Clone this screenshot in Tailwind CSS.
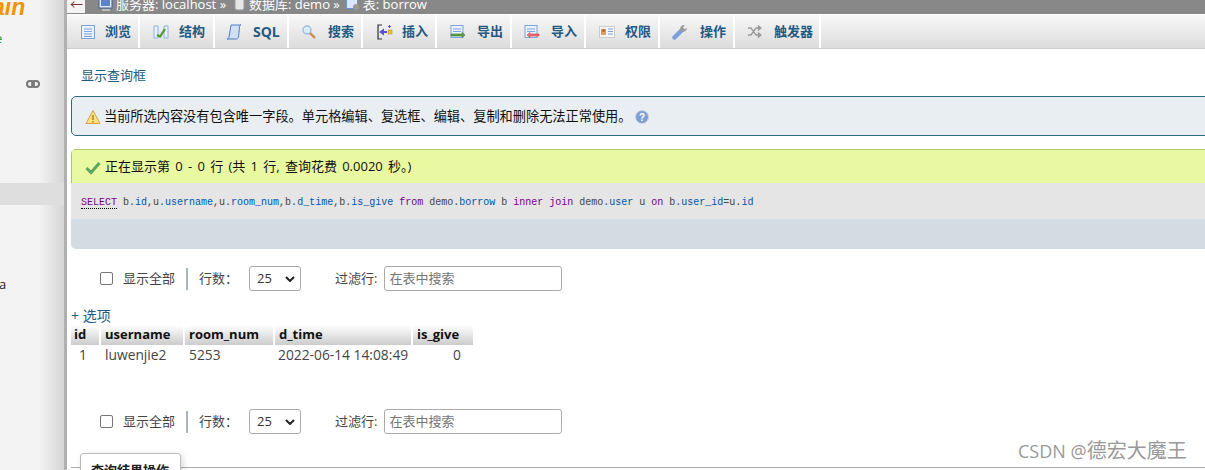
<!DOCTYPE html>
<html lang="zh">
<head>
  <meta charset="utf-8" />
  <title>phpMyAdmin</title>
  <script src="https://cdn.jsdelivr.net/npm/@tailwindcss/browser@4"></script>
</head>
<body class="h-[470px] w-[1205px] overflow-hidden bg-white font-['Open_Sans','Noto_Sans_CJK_SC',sans-serif] text-[13px] text-[#444]">
  <div class="relative flex h-[470px]">
    <!-- Sidebar -->
    <aside class="h-full w-[67px] shrink-0 border-r-[3px] border-[#b0b0b0] bg-gradient-to-r from-[#f3f3f3] from-60% to-[#d6d6d6] overflow-hidden">
      <div class="-mt-[8px] -ml-[8px] h-[34px] font-['Liberation_Sans',sans-serif] text-[23px] font-bold italic leading-[30px] text-[#f29400]">ain</div>
      <div class="-ml-[5px] h-[48px] text-[13px] leading-[24px] text-[#3c8a2e]">e</div>
      <div class="flex h-[109px] justify-end pr-[24px]">
        <svg class="mt-[6px] h-[8px] w-[14px]" viewBox="0 0 14 8" fill="none" stroke="#777" stroke-width="2"><rect x="1" y="1" width="7" height="6" rx="3"/><rect x="6" y="1" width="7" height="6" rx="3"/></svg>
      </div>
      <div class="h-[22px] bg-[#dedede]"></div>
      <div class="-ml-[1px] pt-[70px] text-[13px] leading-[18px] text-[#222]">a</div>
    </aside>

    <!-- Main -->
    <main class="min-w-0 flex-1 overflow-hidden">
      <!-- Breadcrumb -->
      <div class="flex h-[14px] items-start overflow-hidden bg-[#888] text-[13px] text-white">
        <div class="h-[13px] w-[18px] overflow-hidden bg-[#f4f4f4] pl-[3px] text-[13px] leading-[8px] text-[#733]">←</div>
        <div class="-mt-[6px] ml-[13px] flex items-center whitespace-nowrap leading-[20px]">
          <svg class="mr-[2px] h-[16px] w-[16px]" viewBox="0 0 16 16"><rect x="1" y="2" width="13" height="10" fill="#dfe7f5" stroke="#44618f"/><rect x="3" y="4" width="9" height="6" fill="#5b84c4"/><rect x="4" y="13" width="8" height="2" fill="#bbb"/></svg>
          <span>服务器: localhost »</span>
          <svg class="ml-[8px] mr-[4px] h-[14px] w-[11px]" viewBox="0 0 11 14"><rect x="1" y="1" width="9" height="12" rx="2" fill="#e6e6e6" stroke="#999"/></svg>
          <span>数据库: demo »</span>
          <svg class="ml-[6px] mr-[3px] h-[14px] w-[14px]" viewBox="0 0 14 14"><rect x="0.5" y="0.5" width="11" height="11" fill="#dbe7f7" stroke="#6d94cf"/><circle cx="10" cy="10" r="3" fill="#999"/></svg>
          <span>表: borrow</span>
        </div>
      </div>

      <!-- Tabs -->
      <nav class="mt-[1px] flex h-[34px] border-b border-[#ccc] bg-gradient-to-b from-[#f8f8f8] to-[#dcdcdc] font-bold text-[#235a81]">
        <a class="flex w-[73px] items-center border-r-2 border-white pl-[13px]">
          <svg class="mr-[9px] h-[16px] w-[16px]" viewBox="0 0 16 16" fill="#eaf1fb" stroke="#7ba3dc"><rect x="1.5" y="1.5" width="13" height="13"/><path d="M4 5h8M4 7.5h8M4 10h8M4 12.5h8" fill="none"/></svg>
          <span>浏览</span>
        </a>
        <a class="flex w-[75px] items-center border-r-2 border-white pl-[13px]">
          <svg class="mr-[10px] h-[16px] w-[16px]" viewBox="0 0 16 16" fill="#eaf1fb" stroke="#8fb0dd"><path d="M1 2h4v12H1zM11 2h4v12h-4z"/><path d="M4 11l3 1.5L12 5" fill="none" stroke="#4d9a33" stroke-width="2.2"/></svg>
          <span>结构</span>
        </a>
        <a class="flex w-[74px] items-center border-r-2 border-white pl-[11px]">
          <svg class="mr-[11px] h-[16px] w-[16px]" viewBox="0 0 16 16" fill="#cfe0f5" stroke="#4f7fc0"><path d="M5 1h10c-1 0-1.500 1-1.500 2l-1 10c0 1-1 2-2 2H1c1 0 2-1 2-2z"/></svg>
          <span class="text-[14px]">SQL</span>
        </a>
        <a class="flex w-[74px] items-center border-r-2 border-white pl-[13px]">
          <svg class="mr-[12px] h-[14px] w-[14px]" viewBox="0 0 14 14" fill="none"><circle cx="5" cy="5" r="4" fill="#dcebfa" stroke="#9dbde0" stroke-width="1.4"/><path d="M8 8l5 5" stroke="#c98a4a" stroke-width="2.4"/></svg>
          <span>搜索</span>
        </a>
        <a class="flex w-[74px] items-center border-r-2 border-white pl-[14px]">
          <svg class="mr-[9px] h-[16px] w-[16px]" viewBox="0 0 16 16" fill="none"><path d="M5 1H1v14h4" stroke="#333" stroke-width="1.2"/><path d="M2 8l5-3.5V7h3v2H7v2.500z" fill="#5a4fd0"/><rect x="11" y="6" width="4" height="4" fill="#f0c22e" stroke="#a88a20" stroke-width="0.5"/><path d="M12.500 1v3M11 2.500h3" stroke="#5a4fd0"/></svg>
          <span>插入</span>
        </a>
        <a class="flex w-[75px] items-center border-r-2 border-white pl-[13px]">
          <svg class="mr-[11px] h-[16px] w-[16px]" viewBox="0 0 16 16" fill="#eaf1fb" stroke="#7ba3dc"><rect x="1" y="1.500" width="12" height="12"/><path d="M3 5h8M3 7.500h8" fill="none"/><path d="M1 10h11v-1.500l3 2.500-3 2.500V12H1z" fill="#5fa04a" stroke="#3b7a2a" stroke-width="0.600"/></svg>
          <span>导出</span>
        </a>
        <a class="flex w-[74px] items-center border-r-2 border-white pl-[12px]">
          <svg class="mr-[11px] h-[16px] w-[16px]" viewBox="0 0 16 16" fill="#eaf1fb" stroke="#7ba3dc"><rect x="1" y="1.500" width="12" height="12"/><path d="M3 5h8M3 7.500h8" fill="none"/><path d="M15 10H6V8.500L3 11l3 2.500V12h9z" fill="#f07070" stroke="#d83a3a" stroke-width="0.600"/></svg>
          <span>导入</span>
        </a>
        <a class="flex w-[74px] items-center border-r-2 border-white pl-[13px]">
          <svg class="mr-[10px] h-[16px] w-[16px]" viewBox="0 0 16 16"><rect x="0.500" y="2.500" width="15" height="11" fill="#f5f5f5" stroke="#ccc"/><rect x="2" y="5" width="5" height="6" fill="#d8a070"/><circle cx="4.500" cy="6.500" r="1.500" fill="#a86a3a"/><path d="M9 5h5M9 7.500h5M9 10h5" stroke="#7ba3dc"/></svg>
          <span>权限</span>
        </a>
        <a class="flex w-[75px] items-center border-r-2 border-white pl-[12px]">
          <svg class="mr-[11px] h-[17px] w-[17px]" viewBox="0 0 17 17" fill="none"><path d="M2.500 14.500L9 8" stroke="#7c9fdc" stroke-width="4.500" stroke-linecap="round"/><path d="M9 8.500a4 4 0 0 1 3-6.500l1 .3-2 2 1.500 2 2.300-1.500a4 4 0 0 1-5.800 3.700z" fill="#999"/></svg>
          <span>操作</span>
        </a>
        <a class="flex w-[86px] items-center border-r-2 border-white pl-[12px]">
          <svg class="mr-[12px] h-[15px] w-[15px]" viewBox="0 0 15 15" fill="none" stroke="#999" stroke-width="1.300"><path d="M1 4h3l5 7h3M1 11h3l5-7h3"/><path d="M11.500 2l2.500 2-2.500 2zM11.500 9l2.500 2-2.500 2z" fill="#999"/></svg>
          <span>触发器</span>
        </a>
      </nav>

      <!-- Content -->
      <div class="pl-[4px]">
        <p class="h-[47px] pl-[10px] pt-[16px] leading-[20px] text-[#235a81]">显示查询框</p>

        <div class="flex h-[40px] w-[1200px] items-center rounded-[5px] border border-[#2f6a85] bg-[#e8eef1] pl-[13px] pt-[1px] text-[13.2px] text-[#111]">
          <svg class="mr-[3px] h-[16px] w-[16px]" viewBox="0 0 16 16"><path d="M8 1.500L15 14.500H1z" fill="#fbe27d" stroke="#d9a441"/><path d="M8 6v5M8 12v1.500" stroke="#a87a20" stroke-width="1.400"/></svg>
          <span>当前所选内容没有包含唯一字段。单元格编辑、复选框、编辑、复制和删除无法正常使用。</span>
          <svg class="ml-[3px] h-[14px] w-[14px]" viewBox="0 0 14 14"><circle cx="7" cy="7" r="6.500" fill="#7d9fd0" stroke="#c5d4e8"/><text x="7" y="10.500" text-anchor="middle" font-size="10" font-weight="700" fill="#fff" font-family="Liberation Sans">?</text></svg>
        </div>

        <div class="mt-[13px] w-[1200px] overflow-hidden rounded-[5px] bg-[#d3dce3]">
          <div class="flex h-[34px] items-center border-t border-l border-[#a9c86a] bg-[#e9f9a1] pl-[13px] text-[#111]">
            <svg class="mr-[4px] h-[16px] w-[16px]" viewBox="0 0 16 16" fill="none"><path d="M1.500 9l4.500 4.500L14.500 4" stroke="#5ba65b" stroke-width="3"/></svg>
            <span class="[word-spacing:1.9px]">正在显示第 0 - 0 行 (共 1 行, 查询花费 0.0020 秒。)</span>
          </div>
          <div class="h-[36px] whitespace-pre bg-[#e5e5e5] pl-[10px] pt-[13px] font-['Liberation_Mono',monospace] text-[10px] leading-[14px] text-[#444]"><span class="border-b border-dotted border-black text-[#770088]">SELECT</span> b.<span class="text-[#05a]">id</span>,u.<span class="text-[#05a]">username</span>,u.<span class="text-[#05a]">room_num</span>,b.<span class="text-[#05a]">d_time</span>,b.<span class="text-[#05a]">is_give</span> <span class="text-[#770088]">from</span> demo.<span class="text-[#05a]">borrow</span> b <span class="text-[#770088]">inner join</span> demo.<span class="text-[#05a]">user</span> u <span class="text-[#770088]">on</span> b.<span class="text-[#05a]">user_id</span>=u.<span class="text-[#05a]">id</span></div>
          <div class="h-[30px]"></div>
        </div>

        <!-- Navigation -->
        <div class="mt-[17px] flex h-[25px] items-center pl-[29px] text-[#444]">
          <input type="checkbox" class="h-[13px] w-[13px] appearance-none rounded-[2px] border border-[#767676] bg-white" />
          <span class="ml-[10px]">显示全部</span>
          <span class="ml-[11px] h-[22px] w-[2px] bg-[#a8b4bf]"></span>
          <span class="ml-[11px]">行数：</span>
          <div class="ml-[11px] flex h-[25px] w-[52px] items-center justify-between rounded-[3px] border border-[#aaa] pl-[7px] pr-[5px] text-[#333]">
            <span>25</span>
            <svg class="h-[6px] w-[10px]" viewBox="0 0 10 6" fill="none" stroke="#222" stroke-width="2"><path d="M1 1l4 4 4-4"/></svg>
          </div>
          <span class="ml-[34px]">过滤行:</span>
          <div class="ml-[7px] flex h-[25px] w-[178px] items-center rounded-[3px] border border-[#aaa] pl-[4px] text-[#757575]">在表中搜索</div>
        </div>

        <!-- Results table -->
        <div class="mt-[15px] h-[19px] text-[14px] leading-[19px] text-[#235a81]">+ 选项</div>
        <table class="border-collapse">
          <thead>
            <tr class="h-[19px] text-left text-[#111]">
              <th class="w-[29px] border-r-2 border-white bg-gradient-to-b from-white to-[#ccc] pl-[3px] font-bold">id</th>
              <th class="w-[84px] border-r-2 border-white bg-gradient-to-b from-white to-[#ccc] pl-[4px] font-bold">username</th>
              <th class="w-[90px] border-r-2 border-white bg-gradient-to-b from-white to-[#ccc] pl-[4px] font-bold">room_num</th>
              <th class="w-[138px] border-r-2 border-white bg-gradient-to-b from-white to-[#ccc] pl-[4px] font-bold">d_time</th>
              <th class="w-[61px] bg-gradient-to-b from-white to-[#ccc] pl-[4px] font-bold">is_give</th>
            </tr>
          </thead>
          <tbody class="text-[13.8px]">
            <tr class="h-[20px]">
              <td class="pr-[13px] text-right">1</td>
              <td class="pl-[5px]">luwenjie2</td>
              <td class="pl-[5px]">5253</td>
              <td class="pl-[4px]">2022-06-14 14:08:49</td>
              <td class="pr-[12px] text-right">0</td>
            </tr>
          </tbody>
        </table>

        <!-- Navigation again -->
        <div class="mt-[44px] flex h-[25px] items-center pl-[29px] text-[#444]">
          <input type="checkbox" class="h-[13px] w-[13px] appearance-none rounded-[2px] border border-[#767676] bg-white" />
          <span class="ml-[10px]">显示全部</span>
          <span class="ml-[11px] h-[22px] w-[2px] bg-[#a8b4bf]"></span>
          <span class="ml-[11px]">行数：</span>
          <div class="ml-[11px] flex h-[25px] w-[52px] items-center justify-between rounded-[3px] border border-[#aaa] pl-[7px] pr-[5px] text-[#333]">
            <span>25</span>
            <svg class="h-[6px] w-[10px]" viewBox="0 0 10 6" fill="none" stroke="#222" stroke-width="2"><path d="M1 1l4 4 4-4"/></svg>
          </div>
          <span class="ml-[34px]">过滤行:</span>
          <div class="ml-[7px] flex h-[25px] w-[178px] items-center rounded-[3px] border border-[#aaa] pl-[4px] text-[#757575]">在表中搜索</div>
        </div>

        <!-- Query results operations -->
        <div class="relative mt-[14px] h-[20px] w-[1200px] border-b border-[#aaa]">
          <div class="absolute left-[9px] top-[5px] h-[30px] w-[101px] rounded-[3px] border border-[#bbb] bg-white pl-[10px] pt-[7px] font-bold text-[#222] shadow-[2px_2px_6px_rgba(0,0,0,0.15)]">查询结果操作</div>
        </div>
      </div>
    </main>

    <!-- Watermark -->
    <span class="absolute left-[1018px] top-[439px] text-[18px] leading-[24px] text-[#999]">CSDN @<span class="text-[20px]">德宏大魔王</span></span>
  </div>
</body>
</html>
